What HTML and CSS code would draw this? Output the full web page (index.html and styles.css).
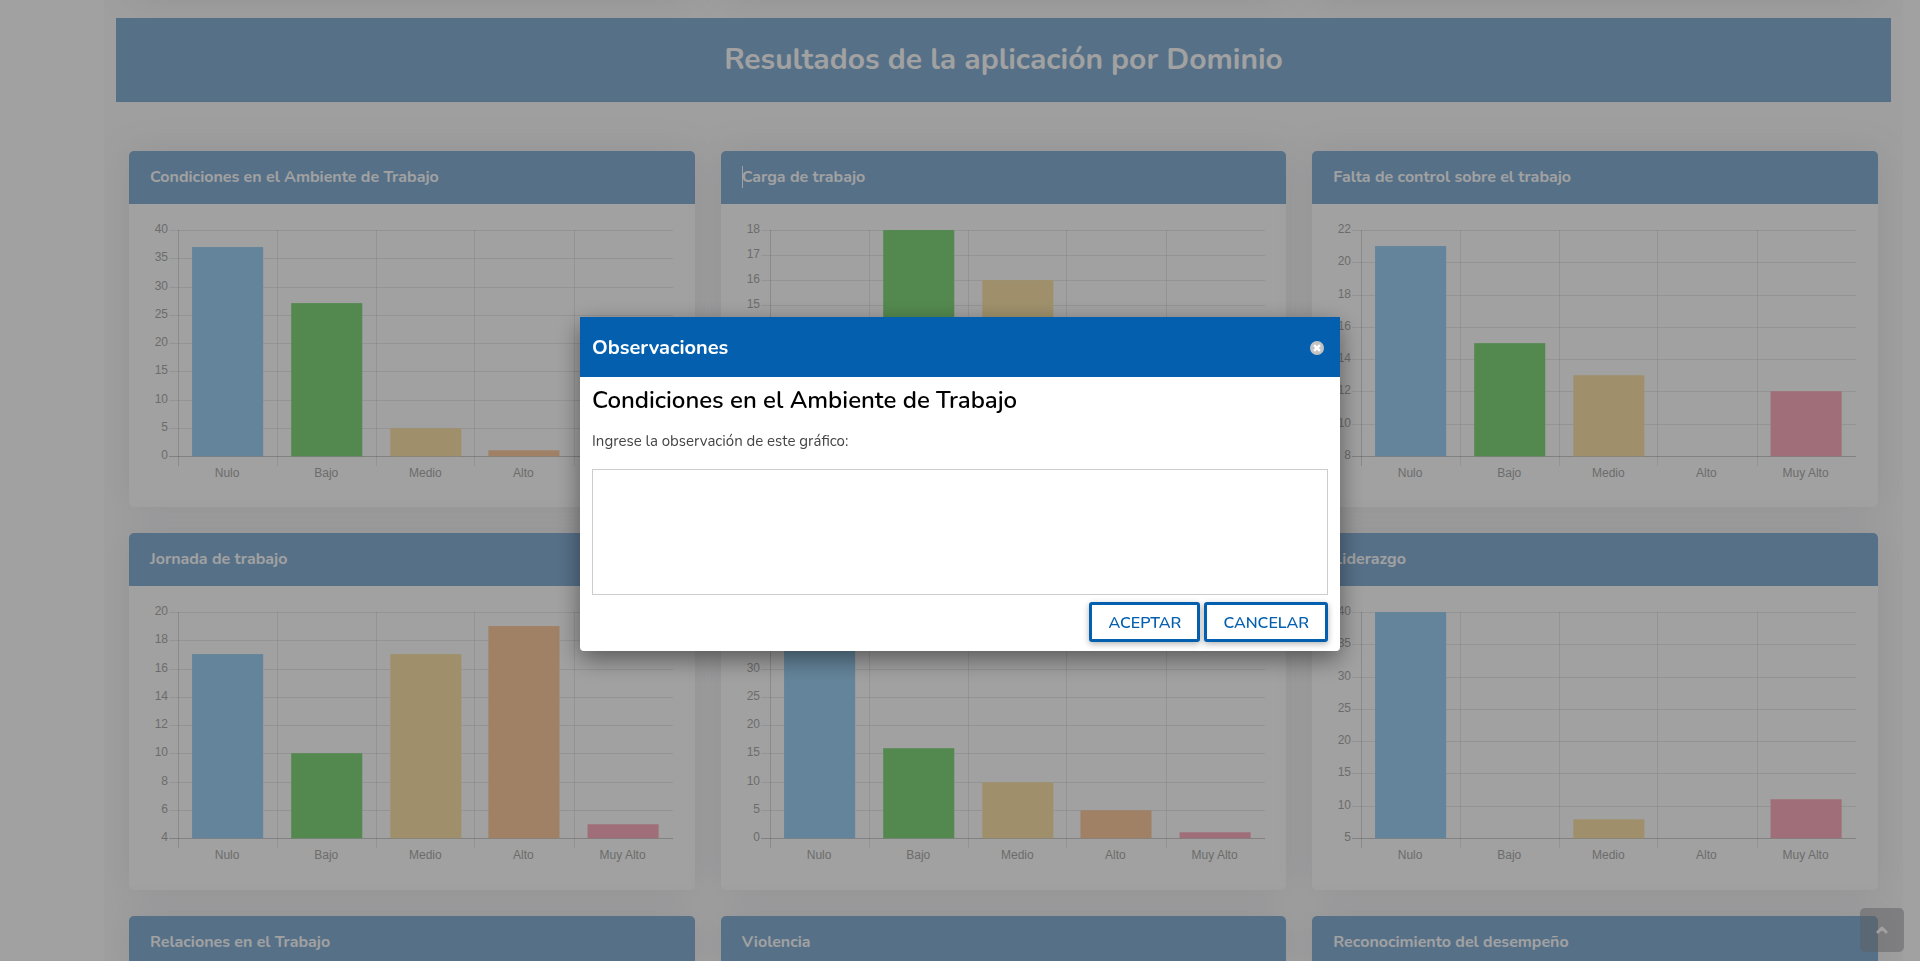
FILE: index.html
```html
<!DOCTYPE html>
<html lang="es">
<head>
<meta charset="utf-8">
<title>Resultados de la aplicación por Dominio</title>
<link rel="stylesheet" href="styles.css">
</head>
<body>
<div class="shell">
  <aside class="sidebar"></aside>
  <main class="content">
    <div class="charts charts--previous">
      <div class="card"></div><div class="card"></div><div class="card"></div>
    </div>
    <h1 class="banner">Resultados de la aplicación por Dominio</h1>
    <div class="charts" id="charts"></div>
  </main>
</div>
<button class="to-top" type="button" aria-label="Volver arriba">
  <svg width="12" height="8" viewBox="0 0 12 8" fill="none" stroke="currentColor" stroke-width="3" stroke-linecap="round" stroke-linejoin="round"><path d="M2 6 6 2l4 4"/></svg>
</button>
<div class="overlay">
  <section class="modal" role="dialog" aria-modal="true" aria-labelledby="modal-title">
    <header class="modal-header">
      <h2 class="modal-title" id="modal-title">Observaciones</h2>
      <button class="modal-close" type="button" aria-label="Cerrar">
        <svg width="14" height="14" viewBox="0 0 14 14"><circle cx="7" cy="7" r="7" fill="#c4c4c4"/><path d="M4.1 4.1l5.8 5.8M9.9 4.1 4.1 9.9" stroke="#fff" stroke-width="2.4"/></svg>
      </button>
    </header>
    <div class="modal-body">
      <h3 class="modal-subject">Condiciones en el Ambiente de Trabajo</h3>
      <label class="modal-label" for="note">Ingrese la observación de este gráfico:</label>
      <textarea class="modal-note" id="note"></textarea>
      <div class="modal-actions">
        <button class="btn" type="button">ACEPTAR</button>
        <button class="btn" type="button">CANCELAR</button>
      </div>
    </div>
  </section>
</div>
<script src="charts.js"></script>
</body>
</html>
```

FILE: charts.js
```js
const labels = ["Nulo", "Bajo", "Medio", "Alto", "Muy Alto"];
const colors = ["#9fd2f6", "#84d87d", "#fce5aa", "#fecda0", "#feafbe"];
const charts = [
  { title: "Condiciones en el Ambiente de Trabajo", min: 0, max: 40, step: 5, values: [37, 27, 5, 1, 0] },
  { title: "Carga de trabajo", min: 9, max: 18, step: 1, values: [12, 18, 16, 10, 9], caret: true },
  { title: "Falta de control sobre el trabajo", min: 8, max: 22, step: 2, values: [21, 15, 13, 8, 12] },
  { title: "Jornada de trabajo", min: 4, max: 20, step: 2, values: [17, 10, 17, 19, 5] },
  { title: "Interferencia en la relación trabajo-familia", min: 0, max: 40, step: 5, values: [38, 16, 10, 5, 1] },
  { title: "Liderazgo", min: 5, max: 40, step: 5, values: [40, 5, 8, 5, 11] },
  { title: "Relaciones en el Trabajo" },
  { title: "Violencia" },
  { title: "Reconocimiento del desempeño" }
];

const plot = { left: 49, right: 543, top: 26, bottom: 252 };

function drawChart(chart) {
  const y = v => Math.round(plot.bottom - (v - chart.min) / (chart.max - chart.min) * (plot.bottom - plot.top));
  const slot = (plot.right - plot.left) / labels.length;
  let out = "";
  for (let v = chart.min; v <= chart.max; v += chart.step) {
    out += `<rect class="${v === chart.min ? "axis" : "grid"}" x="${plot.left - 9}" y="${y(v)}" width="${plot.right - plot.left + 9}" height="1"/>`;
    out += `<text class="tick" x="39" y="${y(v) + 3}" text-anchor="end">${v}</text>`;
  }
  labels.forEach((label, i) => {
    const x = Math.round(plot.left + i * slot);
    const height = plot.bottom - y(chart.values[i]);
    out += `<rect class="${i === 0 ? "edge" : "grid"}" x="${x}" y="${plot.top}" width="1" height="${plot.bottom - plot.top + 10}"/>`;
    out += `<rect x="${x + 14}" y="${y(chart.values[i])}" width="71" height="${height}" fill="${colors[i]}"/>`;
    out += `<text class="tick" x="${Math.round(x + slot / 2)}" y="${plot.bottom + 21}" text-anchor="middle">${label}</text>`;
  });
  return `<svg class="chart" viewBox="0 0 565 303" role="img" aria-label="${chart.title}">${out}</svg>`;
}

document.getElementById("charts").innerHTML = charts.map(c =>
  `<article class="card"><h2 class="card-header"><span class="card-title${c.caret ? " card-title--caret" : ""}">${c.title}</span></h2>${c.values ? drawChart(c) : ""}</article>`
).join("");
```

FILE: styles.css
```css
* { box-sizing: border-box; }
body {
  margin: 0;
  height: 100vh;
  overflow: hidden;
  background: #fff;
  font-family: Nunito, Lato, sans-serif;
}
h1, h2, h3 { margin: 0; }
.shell {
  display: grid;
  grid-template-columns: 104px 1fr;
  height: 100vh;
  margin-right: 17px;
}
.content {
  padding: 0 12px;
  overflow: hidden;
  background: #fcfcfc;
}
.banner {
  position: relative;
  margin: 18px 0 49px;
  padding: 20px;
  background: #89b2d8;
  color: #fff;
  font-size: 30px;
  line-height: 44px;
  text-align: center;
}
.charts {
  display: grid;
  grid-template-columns: repeat(3, 1fr);
  gap: 26px;
  padding: 0 13px;
}
.charts--previous { height: 0; }
.charts--previous .card { height: 40px; margin-top: -41px; }
.card {
  border-radius: 5px;
  background: #fff;
  box-shadow: 0 0 35px 0 rgba(112, 112, 140, .15);
}
.card-header {
  padding: 15px 21px 16px;
  border-radius: 5px 5px 0 0;
  background: #89b2d8;
  color: #fff;
  font-size: 16px;
  line-height: 22px;
}
.card-title { display: inline-block; }
.card-title--caret { box-shadow: inset 1px 0 #fff; }
.chart { display: block; width: 100%; }
.grid { fill: rgba(0, 0, 0, .08); shape-rendering: crispEdges; }
.edge { fill: rgba(0, 0, 0, .14); shape-rendering: crispEdges; }
.axis { fill: rgba(0, 0, 0, .2); shape-rendering: crispEdges; }
.tick { fill: #acacac; font: 12px "Liberation Sans", Arial, sans-serif; }
.to-top {
  position: fixed;
  right: 16px;
  bottom: 9px;
  display: grid;
  place-items: center;
  width: 44px;
  height: 44px;
  padding: 0;
  border: 0;
  border-radius: 5px;
  background: rgba(150, 150, 155, .5);
  color: #fff;
}
.overlay {
  position: fixed;
  inset: 0;
  display: grid;
  align-content: center;
  justify-content: center;
  padding-top: 7px;
  background: rgba(0, 0, 0, .37);
}
.modal {
  width: 760px;
  max-width: 100vw;
  border-radius: 4px;
  background: #fff;
  box-shadow: 0 8px 24px rgba(0, 0, 0, .45);
}
.modal-header {
  display: flex;
  align-items: center;
  justify-content: space-between;
  height: 60px;
  padding: 2px 16px 0 12px;
  background: #0460af;
  color: #fff;
}
.modal-title { font-size: 20px; font-weight: 750; line-height: 28px; }
.modal-close { display: flex; padding: 0; border: 0; background: none; }
.modal-body { padding: 7px 12px 9px; }
.modal-subject { color: #000; font-size: 24px; font-weight: 650; line-height: 32px; }
.modal-label { display: block; margin: 14px 0 17px; color: #444; font-size: 15px; line-height: 22px; }
.modal-note {
  display: block;
  width: 100%;
  height: 126px;
  border: 1px solid #ccc;
  background: #fff;
  resize: none;
}
.modal-actions { display: flex; justify-content: flex-end; gap: 4px; margin-top: 7px; }
.btn {
  height: 40px;
  padding: 1px 16px 0;
  border: 3px solid #0460af;
  border-radius: 3px;
  background: #fff;
  box-shadow: 0 2px 6px rgba(0, 0, 0, .3);
  color: #0460af;
  font: 650 16px Nunito, Lato, sans-serif;
}
```
